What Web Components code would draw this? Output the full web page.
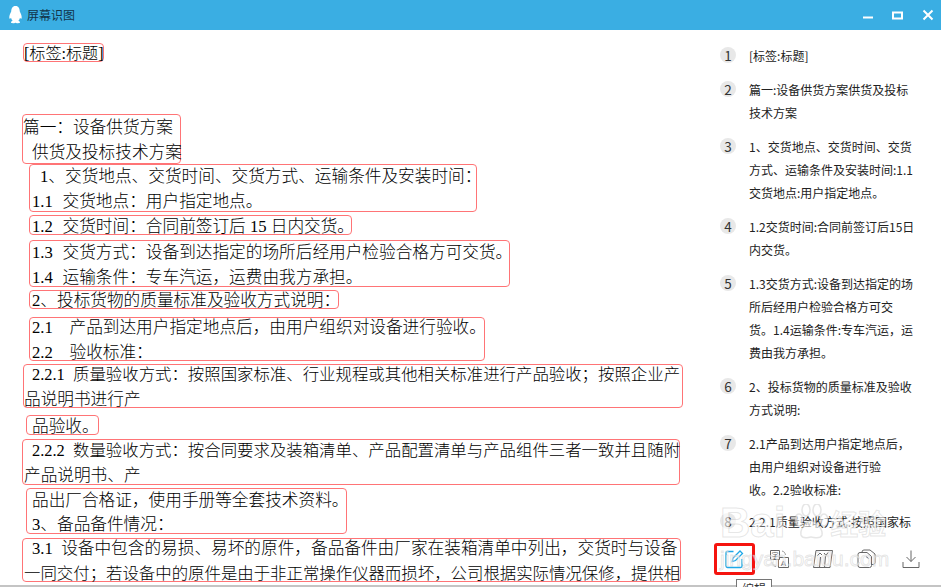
<!DOCTYPE html>
<html lang="zh">
<head>
<meta charset="utf-8">
<title>屏幕识图</title>
<style>
  html, body { margin: 0; height: 100%; background: #fff; }
  body { font-family: "Liberation Serif", "Noto Sans CJK SC", serif; overflow: hidden; }
</style>
</head>
<body>
<ocr-window>
  <ocr-titlebar slot="title">屏幕识图</ocr-titlebar>

  <ocr-box x="23" w="81" h="19" top="13"><ocr-line x="1" size="16.1">[标签:标题]</ocr-line></ocr-box>
  <ocr-box x="22" w="159" h="49.5" top="52">
    <ocr-line x="1">篇一：设备供货方案</ocr-line>
    <ocr-line x="10">供货及投标技术方案</ocr-line>
  </ocr-box>
  <ocr-box x="29" w="448" h="48.5" top="0">
    <ocr-line x="11">1、交货地点、交货时间、交货方式、运输条件及安装时间：</ocr-line>
    <ocr-line x="3">1.1&nbsp;&nbsp;&#8202;交货地点：用户指定地点。</ocr-line>
  </ocr-box>
  <ocr-box x="29" w="323" h="20" top="3"><ocr-line x="3">1.2&nbsp;&nbsp;&#8202;交货时间：合同前签订后 15 日内交货。</ocr-line></ocr-box>
  <ocr-box x="29" w="481" h="47" top="5">
    <ocr-line x="3">1.3&nbsp;&nbsp;&#8202;交货方式：设备到达指定的场所后经用户检验合格方可交货。</ocr-line>
    <ocr-line x="3">1.4&nbsp;&nbsp;&#8202;运输条件：专车汽运，运费由我方承担。</ocr-line>
  </ocr-box>
  <ocr-box x="29" w="310" h="19" top="3"><ocr-line x="3">2、投标货物的质量标准及验收方式说明：</ocr-line></ocr-box>
  <ocr-box x="29" w="456" h="43.5" top="8">
    <ocr-line x="3">2.1&nbsp;&nbsp;&nbsp;&nbsp;产品到达用户指定地点后，由用户组织对设备进行验收。</ocr-line>
    <ocr-line x="3">2.2&nbsp;&nbsp;&nbsp;&nbsp;验收标准：</ocr-line>
  </ocr-box>
  <ocr-box x="23" w="660" h="43.5" top="3.5">
    <ocr-line x="9" size="16.42">2.2.1&nbsp;&nbsp;质量验收方式：按照国家标准、行业规程或其他相关标准进行产品验收；按照企业产</ocr-line>
    <ocr-line x="1">品说明书进行产</ocr-line>
  </ocr-box>
  <ocr-box x="26" w="72.5" h="19.5" top="7.5"><ocr-line x="6">品验收。</ocr-line></ocr-box>
  <ocr-box x="22" w="658" h="45.5" top="4.5">
    <ocr-line x="10" size="16.42">2.2.2&nbsp;&nbsp;数量验收方式：按合同要求及装箱清单、产品配置清单与产品组件三者一致并且随附</ocr-line>
    <ocr-line x="2">产品说明书、产</ocr-line>
  </ocr-box>
  <ocr-box x="26" w="320.5" h="46" top="3.5">
    <ocr-line x="6">品出厂合格证，使用手册等全套技术资料。</ocr-line>
    <ocr-line x="6">3、备品备件情况：</ocr-line>
  </ocr-box>
  <ocr-box x="22" w="659" h="43.5" top="4">
    <ocr-line x="10">3.1&nbsp;&nbsp;设备中包含的易损、易坏的原件，备品备件由厂家在装箱清单中列出，交货时与设备</ocr-line>
    <ocr-line x="2" size="16.42">一同交付；若设备中的原件是由于非正常操作仪器而损坏，公司根据实际情况保修，提供相</ocr-line>
  </ocr-box>

  <ocr-item slot="list" n="1">[标签:标题]</ocr-item>
  <ocr-item slot="list" n="2">篇一:设备供货方案供货及投标<br>技术方案</ocr-item>
  <ocr-item slot="list" n="3">1、交货地点、交货时间、交货<br>方式、运输条件及安装时间:1.1<br>交货地点:用户指定地点。</ocr-item>
  <ocr-item slot="list" n="4">1.2交货时间:合同前签订后15日<br>内交货。</ocr-item>
  <ocr-item slot="list" n="5">1.3交货方式:设备到达指定的场<br>所后经用户检验合格方可交<br>货。1.4运输条件:专车汽运，运<br>费由我方承担。</ocr-item>
  <ocr-item slot="list" n="6">2、投标货物的质量标准及验收<br>方式说明:</ocr-item>
  <ocr-item slot="list" n="7">2.1产品到达用户指定地点后，<br>由用户组织对设备进行验<br>收。2.2验收标准:</ocr-item>
  <ocr-item slot="list" n="8" style="margin-top:-2px">2.2.1质量验收方式:按照国家标</ocr-item>

  <ocr-toolbar slot="tools"></ocr-toolbar>
  <ocr-watermark slot="overlay"></ocr-watermark>
</ocr-window>

<script>
/**
 * The window frame: title bar on top, document on the left, result list and toolbar on the right.
 */
customElements.define('ocr-window',
  class extends HTMLElement {
    constructor () {
      super()
      this.attachShadow({ mode: 'open' }).innerHTML = `
        <style>
          :host { display: flex; flex-direction: column; width: 941px; height: 587px; overflow: hidden; position: relative; }
          #main { flex: 1; display: flex; min-height: 0; }
          #doc { width: 700px; flex: none; overflow: hidden; display: flex; flex-direction: column; }
          #side { flex: 1; display: flex; flex-direction: column; min-width: 0; }
          #list { height: 500px; flex: none; overflow: hidden; padding-top: 14px; box-sizing: border-box; }
          #edge { height: 2px; flex: none; background: #c4c4c4; }
        </style>
        <slot name="title"></slot>
        <div id="main">
          <div id="doc"><slot></slot></div>
          <div id="side">
            <div id="list"><slot name="list"></slot></div>
            <slot name="tools"></slot>
          </div>
        </div>
        <div id="edge"></div>
        <slot name="overlay"></slot>
      `
    }
  }
)

/**
 * The blue title bar with the penguin logo and the window buttons.
 */
customElements.define('ocr-titlebar',
  class extends HTMLElement {
    constructor () {
      super()
      this.attachShadow({ mode: 'open' }).innerHTML = `
        <style>
          :host { display: flex; align-items: center; height: 30px; flex: none; background: #3aaee3; color: #12344a;
            font: 12px "Noto Sans CJK SC", sans-serif; padding: 0 3px 0 9px; }
          #logo { margin-right: 5px; }
          #title { position: relative; top: -1px; }
          #controls { margin-left: auto; display: flex; gap: 10px; }
          #controls svg { display: block; }
        </style>
        <svg id="logo" width="13" height="18" viewBox="0 0 13 18">
          <path fill="#fff" d="M6.500 0C3.300 0 2.300 2.500 2.200 5.600C1 7.800.2 10 .3 12C.5 13.400 1.500 12.600 2 11.700C2.300 13 2.800 14 3.600 14.800C2.500 15.300 1.800 15.900 2 16.600C2.400 17.500 4.800 17.400 6.500 16.700C8.200 17.400 10.600 17.500 11 16.600C11.200 15.900 10.500 15.300 9.400 14.800C10.200 14 10.700 13 11 11.700C11.500 12.600 12.500 13.400 12.700 12C12.800 10 12 7.800 10.800 5.600C10.700 2.500 9.700 0 6.500 0Z"/>
        </svg>
        <span id="title"><slot></slot></span>
        <div id="controls">
          <svg width="20" height="20" viewBox="0 0 20 20"><path d="M5 12.500H15" stroke="#fff" stroke-width="2"/></svg>
          <svg width="20" height="20" viewBox="0 0 20 20"><rect x="5" y="7.500" width="9" height="6" fill="none" stroke="#fff" stroke-width="2"/></svg>
          <svg width="20" height="20" viewBox="0 0 20 20"><path d="M5.500 5.500L14.500 14.500M14.500 5.500L5.500 14.500" stroke="#fff" stroke-width="2"/></svg>
        </div>
      `
    }
  }
)

/**
 * A red rounded frame round one recognised block of the document.
 * Attributes: x (left), w (width), h (height), top (gap above the block).
 */
customElements.define('ocr-box',
  class extends HTMLElement {
    constructor () {
      super()
      this.attachShadow({ mode: 'open' }).innerHTML = `
        <style>
          :host { display: flex; flex-direction: column; justify-content: center; flex: none; box-sizing: border-box;
            border: 1px solid #ff7476; border-radius: 4px; }
        </style>
        <slot></slot>
      `
    }

    /**
     * Called after the element is inserted into the DOM.
     */
    connectedCallback () {
      this.style.marginLeft = this.getAttribute('x') + 'px'
      this.style.width = this.getAttribute('w') + 'px'
      this.style.height = this.getAttribute('h') + 'px'
      this.style.marginTop = this.getAttribute('top') + 'px'
    }
  }
)

/**
 * One text line inside a box; x is its indent from the frame, size an optional font size.
 */
customElements.define('ocr-line',
  class extends HTMLElement {
    constructor () {
      super()
      this.attachShadow({ mode: 'open' }).innerHTML = `
        <style>
          :host { display: block; flex: none; height: 24.500px; line-height: 27.500px; white-space: nowrap;
            font-size: 16.670px; color: #000; font-weight: 300; }
        </style>
        <slot></slot>
      `
    }

    /**
     * Called after the element is inserted into the DOM.
     */
    connectedCallback () {
      this.style.paddingLeft = (this.getAttribute('x') - 1) + 'px'
      if (this.hasAttribute('size')) {
        this.style.fontSize = this.getAttribute('size') + 'px'
      }
    }
  }
)

/**
 * One numbered entry of the result list.
 */
customElements.define('ocr-item',
  class extends HTMLElement {
    constructor () {
      super()
      this.attachShadow({ mode: 'open' }).innerHTML = `
        <style>
          :host { display: grid; grid-template-columns: 16px 1fr; column-gap: 13px; padding: 0 0 11px 20px;
            font: 12px/23px "Noto Sans CJK SC", sans-serif; color: #222; white-space: nowrap; }
          #badge { width: 16px; height: 16px; margin-top: 3px; border-radius: 50%; background: #e8e8e8;
            text-align: center; line-height: 16px; font-size: 13.500px; color: #333; }
        </style>
        <span id="badge"></span>
        <span><slot></slot></span>
      `
      this.shadowRoot.querySelector('#badge').textContent = this.getAttribute('n')
    }
  }
)

/**
 * The row of icon buttons below the list, the first one marked in red.
 */
customElements.define('ocr-toolbar',
  class extends HTMLElement {
    constructor () {
      super()
      this.attachShadow({ mode: 'open' }).innerHTML = `
        <style>
          :host { display: flex; flex: 1; align-items: flex-start; padding: 13px 0 0 14px; background: #fff; position: relative; gap: 3px; }
          .tool { width: 41px; height: 32px; display: flex; align-items: center; justify-content: center; flex: none; box-sizing: border-box; }
          #edit { border: 3px solid #f5140f; border-radius: 3px; padding-right: 2px; }
          svg { display: block; fill: none; stroke: #666; stroke-width: 1; }
          #tip { position: absolute; left: 36px; top: 49px; width: 36px; height: 20px; box-sizing: border-box; border: 1px solid #767676;
            background: #fff; font: 12px/18px "Noto Sans CJK SC", sans-serif; color: #333; text-align: center; }
        </style>
        <div class="tool" id="edit">
          <svg width="20" height="20" viewBox="0 0 20 20" style="stroke:#1ea7e8;stroke-width:1.300">
            <path d="M9.500 2.500H3.500A1.500 1.500 0 0 0 2 4V17A1.500 1.500 0 0 0 3.500 18.500H16.500A1.500 1.500 0 0 0 18 17V10"/>
            <path d="M8 12.500L9 9L16 2L18.500 4.500L11.500 11.500Z"/>
          </svg>
        </div>
        <div class="tool">
          <svg width="20" height="20" viewBox="0 0 20 20">
            <path d="M1.500 1.500H10.500V10.500H1.500Z"/>
            <path d="M10.500 8.500H19.500V18.500H9.500V11"/>
            <path d="M13 2C15 2.500 16 3.500 16.500 6M3 13C3.300 15.500 4.500 17 7 17.500" stroke="#999"/>
            <text x="6" y="8.500" font-size="7" text-anchor="middle" fill="#666" stroke="none" font-family="Noto Sans CJK SC">字</text>
            <text x="14.500" y="16.500" font-size="8" text-anchor="middle" fill="#666" stroke="none" font-family="Liberation Sans">A</text>
          </svg>
        </div>
        <div class="tool">
          <svg width="22" height="20" viewBox="0 0 22 20">
            <path d="M4 1.500H20.500L18 18.500H1.500Z"/>
            <path d="M8.500 8L7.500 18.500M13.500 7L12.500 18.500"/>
            <path d="M5 7L8 4L10 6M12 4L14 6.500L16 3.500"/>
          </svg>
        </div>
        <div class="tool">
          <svg width="20" height="20" viewBox="0 0 20 20">
            <path d="M3 3.500H10L14.500 7.500V16.500A2 2 0 0 1 12.500 18.500H3A2 2 0 0 1 1 16.500V5.500A2 2 0 0 1 3 3.500Z"/>
            <path d="M5 3.500V3A2 2 0 0 1 7 1H13L18 5V13.500A2 2 0 0 1 16 15.500H14.500"/>
            <path d="M9 7.500L11.500 9.500"/>
          </svg>
        </div>
        <div class="tool">
          <svg width="20" height="20" viewBox="0 0 20 20">
            <path d="M10 1.500V12.500M5.500 8L10 12.500L14.500 8"/>
            <path d="M2 13V18.500H18V13"/>
          </svg>
        </div>
        <div id="tip">编辑</div>
      `
    }
  }
)

/**
 * The outlined Baidu watermark lying over the lower right corner.
 */
customElements.define('ocr-watermark',
  class extends HTMLElement {
    constructor () {
      super()
      this.attachShadow({ mode: 'open' }).innerHTML = `
        <style>
          :host { position: absolute; left: 720px; top: 500px; width: 200px; height: 75px; pointer-events: none;
            color: rgba(255, 255, 255, .6); -webkit-text-stroke: 1px rgba(170, 170, 170, .3); }
          div { display: flex; align-items: center; white-space: nowrap; }
          #top { font: bold 42px/46px "Liberation Sans", sans-serif; height: 46px; }
          #cn { font: bold 28px/46px "Noto Sans CJK SC", sans-serif; }
          svg { margin: 0 1px 0 8px; }
          #url { font: 21px/26px "Liberation Sans", sans-serif; }
        </style>
        <div id="top">
          <span>Bai</span>
          <svg width="36" height="38" viewBox="0 0 36 38" fill="rgba(255,255,255,.6)" stroke="rgba(170,170,170,.3)" stroke-width="1.500">
            <ellipse cx="6" cy="16" rx="4" ry="6"/><ellipse cx="13" cy="6" rx="4" ry="6"/><ellipse cx="24" cy="6" rx="4" ry="6"/><ellipse cx="31" cy="16" rx="4" ry="6"/>
            <path d="M18 17C12 17 7 26 8 31C10 36 15 33 18 33C21 33 27 36 29 31C30 26 24 17 18 17Z"/>
          </svg>
          <span id="cn">经验</span>
        </div>
        <div id="url">jingyan.baidu.com</div>
      `
    }
  }
)
</script>
</body>
</html>
